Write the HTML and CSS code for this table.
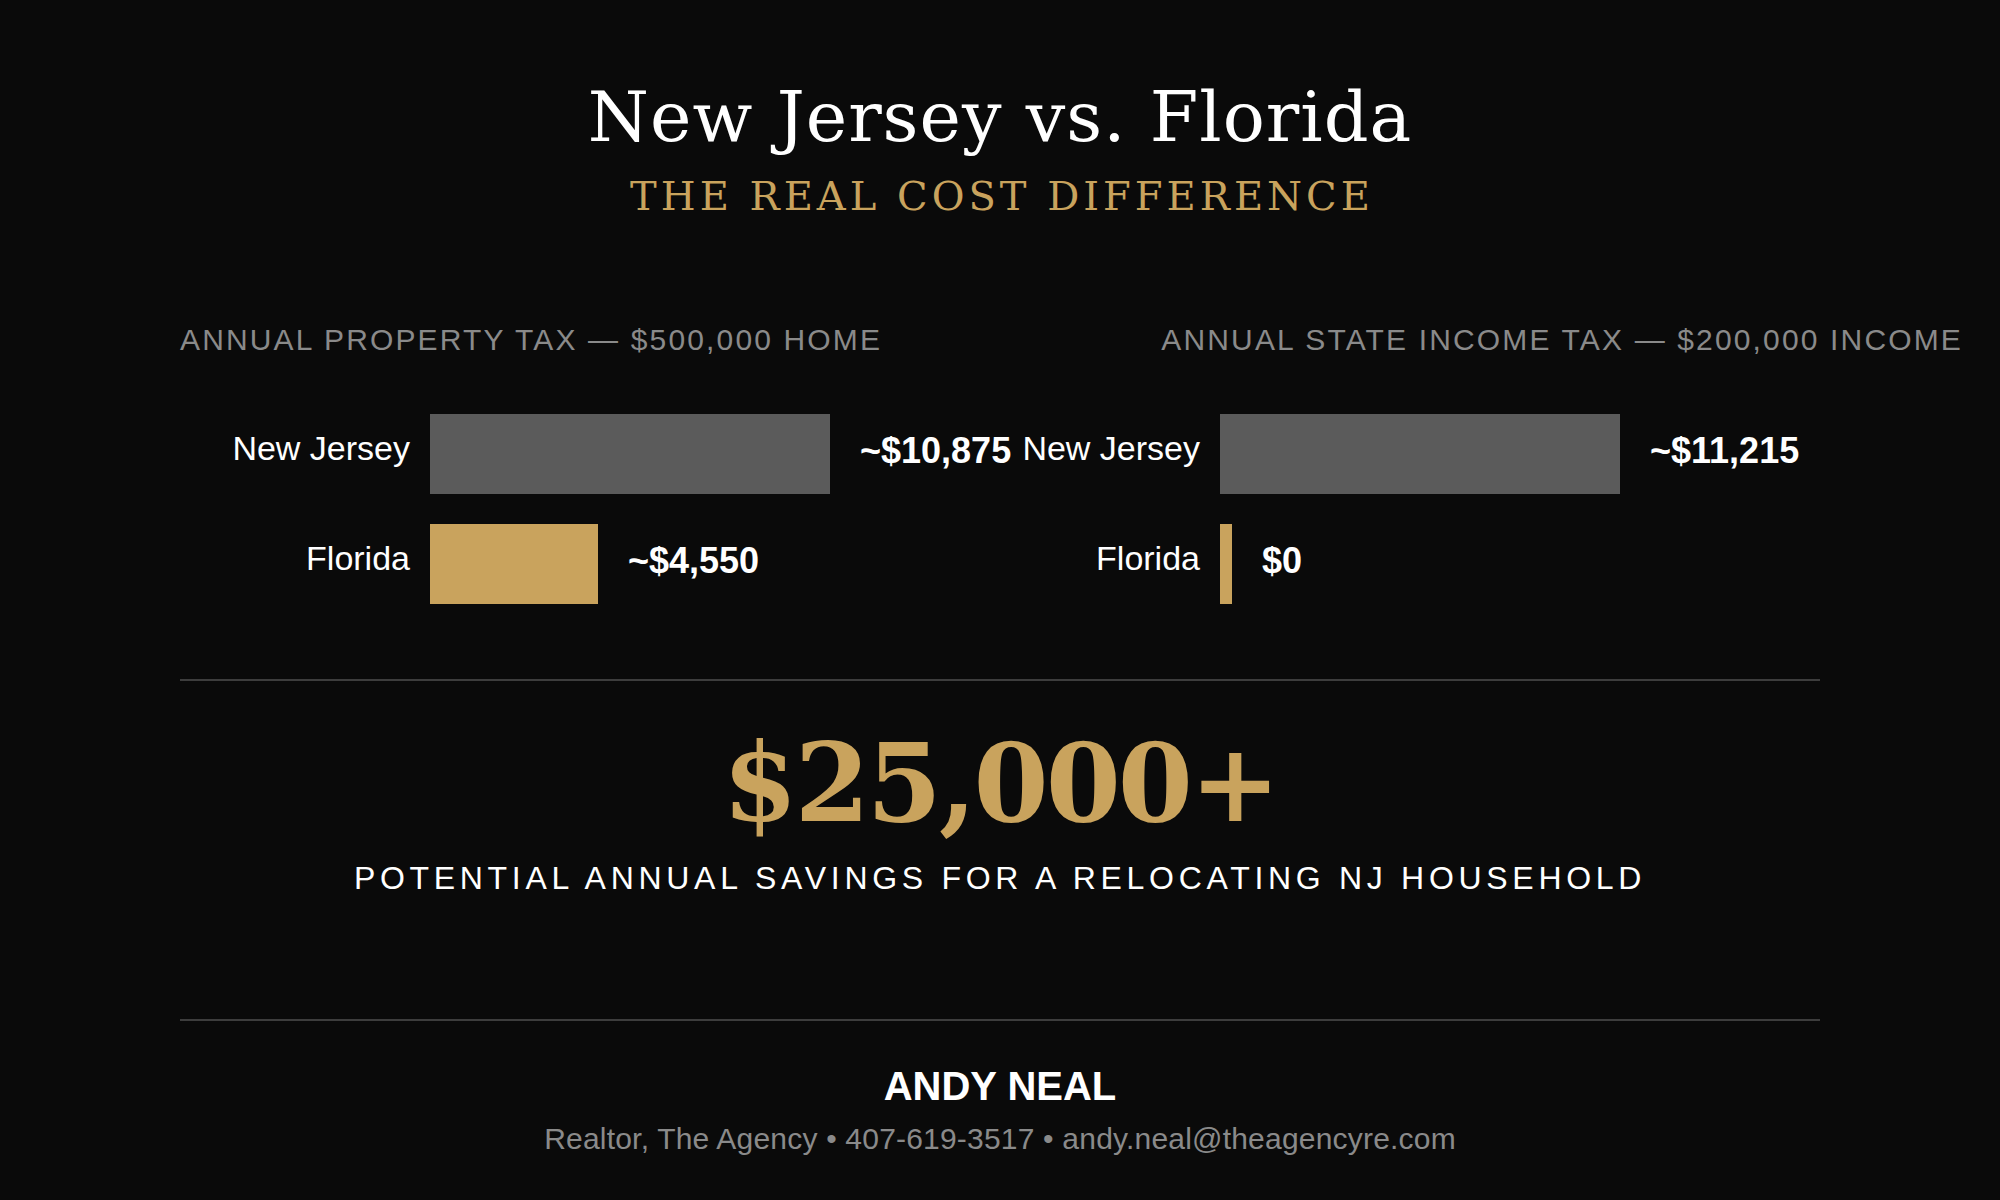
FILE: index.html
```html
<!DOCTYPE html>
<html lang="en">
<head>
<meta charset="utf-8">
<title>New Jersey vs. Florida</title>
<link rel="stylesheet" href="styles.css">
</head>
<body>
<main class="page">
  <header class="hero">
    <h1 class="title">New Jersey vs. Florida</h1>
    <p class="subtitle">THE REAL COST DIFFERENCE</p>
  </header>

  <section class="charts">
    <div class="panel panel-left">
      <h2 class="panel-title">ANNUAL PROPERTY TAX — $500,000 HOME</h2>
      <div class="rows">
        <div class="row">
          <span class="label">New Jersey</span>
          <span class="bar bar-nj" style="width:400px"></span>
          <span class="value">~$10,875</span>
        </div>
        <div class="row">
          <span class="label">Florida</span>
          <span class="bar bar-fl" style="width:168px"></span>
          <span class="value">~$4,550</span>
        </div>
      </div>
    </div>
    <div class="panel panel-right">
      <h2 class="panel-title">ANNUAL STATE INCOME TAX — $200,000 INCOME</h2>
      <div class="rows">
        <div class="row">
          <span class="label">New Jersey</span>
          <span class="bar bar-nj" style="width:400px"></span>
          <span class="value">~$11,215</span>
        </div>
        <div class="row">
          <span class="label">Florida</span>
          <span class="bar bar-fl" style="width:12px"></span>
          <span class="value">$0</span>
        </div>
      </div>
    </div>
  </section>

  <section class="savings">
    <div class="big-number">$25,000+</div>
    <p class="savings-caption">POTENTIAL ANNUAL SAVINGS FOR A RELOCATING NJ HOUSEHOLD</p>
  </section>

  <footer class="contact">
    <div class="name">ANDY NEAL</div>
    <div class="details">Realtor, The Agency • 407-619-3517 • andy.neal@theagencyre.com</div>
  </footer>
</main>
</body>
</html>
```

FILE: styles.css
```css
html, body {
  margin: 0;
  padding: 0;
  background: #0a0a0a;
}

body {
  font-family: "Liberation Sans", Arial, sans-serif;
  color: #ffffff;
}

.page {
  width: 1640px;
  margin: 0 auto;
  padding-top: 77px;
}

.hero {
  text-align: center;
}

.title {
  margin: 0;
  font-family: "DejaVu Serif", serif;
  font-weight: normal;
  font-size: 70px;
  line-height: 80px;
  letter-spacing: 1px;
  color: #ffffff;
}

.subtitle {
  margin: 14px 0 0;
  padding-left: 4px;
  font-family: "DejaVu Serif", serif;
  font-size: 40px;
  line-height: 50px;
  letter-spacing: 4px;
  color: #c9a35d;
}

.charts {
  display: flex;
  margin-top: 101px;
}

.panel {
  flex: none;
  display: flex;
  flex-direction: column;
}

.panel-left {
  width: 790px;
}

.panel-right {
  width: 993px;
}

.panel-title {
  margin: 0;
  font-size: 30px;
  line-height: 36px;
  font-weight: normal;
  letter-spacing: 2.15px;
  color: #8a8a8a;
  white-space: nowrap;
}

.panel-right .panel-title {
  align-self: flex-end;
}

.rows {
  display: flex;
  flex-direction: column;
  gap: 30px;
  margin-top: 56px;
}

.row {
  display: flex;
  align-items: center;
  height: 80px;
}

.label {
  flex: none;
  width: 230px;
  margin-right: 20px;
  padding-bottom: 12px;
  text-align: right;
  font-size: 34px;
  line-height: 40px;
  color: #ffffff;
  white-space: nowrap;
}

.bar {
  flex: none;
  height: 80px;
}

.bar-nj {
  background: #5b5b5b;
}

.bar-fl {
  background: #c9a35d;
}

.value {
  flex: none;
  margin-left: 30px;
  padding-bottom: 6px;
  font-size: 36px;
  line-height: 40px;
  font-weight: bold;
  color: #ffffff;
  white-space: nowrap;
}

.savings {
  margin-top: 75px;
  border-top: 2px solid #3d3d3d;
  padding-top: 42px;
  text-align: center;
}

.big-number {
  font-family: "DejaVu Serif", serif;
  font-weight: bold;
  font-size: 108px;
  line-height: 120px;
  letter-spacing: -3px;
  color: #c9a35d;
}

.savings-caption {
  margin: 15px 0 0;
  font-size: 32px;
  line-height: 40px;
  letter-spacing: 4.7px;
  color: #ffffff;
}

.contact {
  margin-top: 121px;
  border-top: 2px solid #3d3d3d;
  padding-top: 41px;
  text-align: center;
}

.name {
  font-size: 40px;
  line-height: 48px;
  font-weight: bold;
  color: #ffffff;
}

.details {
  margin-top: 11px;
  font-size: 30px;
  line-height: 36px;
  letter-spacing: 0.2px;
  color: #8a8a8a;
}
```
